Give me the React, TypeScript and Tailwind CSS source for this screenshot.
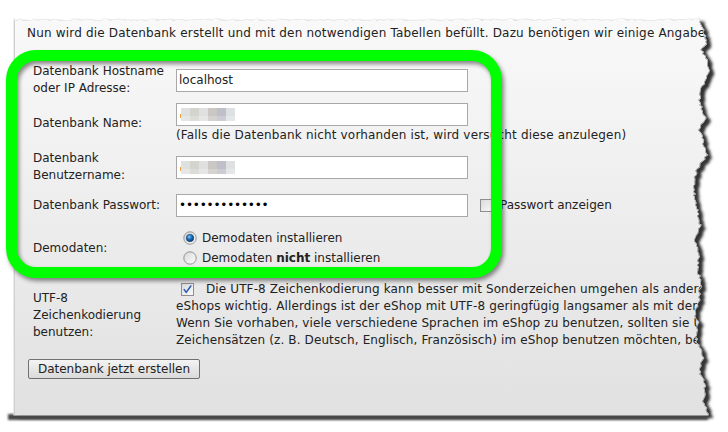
import React from 'react';

// deterministic jitter for the torn paper edge
const noise = (i: number) => {
  const s = Math.sin(i * 12.9898 + 4.1414) * 43758.5453;
  return s - Math.floor(s);
};

const anchors: [number, number][] = [
  [18, 699], [30, 703], [42, 707], [50, 701], [58, 706], [70, 709], [82, 704], [92, 699],
  [105, 700], [118, 705], [128, 699], [142, 703], [155, 707], [165, 699], [178, 694],
  [195, 694], [210, 697], [225, 700], [240, 695], [255, 699], [270, 697], [282, 701],
  [292, 699], [302, 699], [312, 694], [322, 698], [333, 696], [343, 697], [356, 703],
  [370, 699], [386, 705], [400, 703], [415, 708],
];

const buildPanelPath = () => {
  const pts: string[] = [];
  let k = 0;
  for (let x = 14; x < 699; x += 3) {
    pts.push(`${x},${(20 + (noise(k++) - 0.5) * 2).toFixed(1)}`);
  }
  for (let a = 0; a < anchors.length - 1; a++) {
    const [y0, x0] = anchors[a];
    const [y1, x1] = anchors[a + 1];
    for (let y = y0; y < y1; y += 2) {
      const t = (y - y0) / (y1 - y0);
      const x = x0 + (x1 - x0) * t + (noise(k++) - 0.5) * 2.6;
      pts.push(`${x.toFixed(1)},${y}`);
    }
  }
  pts.push('708,415', '14,415');
  return 'M' + pts.join(' L') + ' Z';
};

const panelPath = buildPanelPath();
const outsidePath = 'M0,0 H728 V432 H0 Z ' + panelPath;

const TornFrame = () => (
  <svg className="absolute inset-0 pointer-events-none" width="728" height="432" viewBox="0 0 728 432">
    <defs>
      <clipPath id="outside">
        <path d={outsidePath} clipRule="evenodd" />
      </clipPath>
      <filter id="blur" x="-5%" y="-5%" width="110%" height="110%">
        <feGaussianBlur stdDeviation="1.4" />
      </filter>
      <filter id="blur2" x="-5%" y="-100%" width="110%" height="300%">
        <feGaussianBlur stdDeviation="0.8" />
      </filter>
    </defs>
    <path d={outsidePath} fill="#ffffff" fillRule="evenodd" />
    <g clipPath="url(#outside)">
      <path d={panelPath} transform="translate(5,3)" fill="#2a2a2a" filter="url(#blur)" />
      <path d={panelPath} transform="translate(3,2)" fill="#3c3c3c" opacity="0.6" filter="url(#blur)" />
      <rect x="8" y="414" width="700" height="6" fill="#474747" filter="url(#blur2)" />
      <path d={panelPath} fill="none" stroke="#e2e2e2" strokeWidth="1.2" />
    </g>
  </svg>
);

const Radio = ({ checked, id }: { checked?: boolean; id: string }) => (
  <svg width="14" height="14" viewBox="0 0 14 14" className="shrink-0">
    <defs>
      <linearGradient id={`rg-${id}`} x1="0" y1="0" x2="1" y2="1">
        <stop offset="0" stopColor="#d6d6d6" />
        <stop offset="1" stopColor="#ffffff" />
      </linearGradient>
      <radialGradient id={`rd-${id}`} cx="0.4" cy="0.35" r="0.7">
        <stop offset="0" stopColor="#8fd0ff" />
        <stop offset="0.4" stopColor="#1f78c4" />
        <stop offset="1" stopColor="#08305e" />
      </radialGradient>
    </defs>
    <circle cx="7" cy="7" r="6.2" fill={`url(#rg-${id})`} stroke="#8a8a8a" strokeWidth="0.9" />
    {checked && <circle cx="7" cy="7" r="3.8" fill={`url(#rd-${id})`} stroke="#0d3a6a" strokeWidth="0.5" />}
  </svg>
);

const Checkbox = ({ checked, id }: { checked?: boolean; id: string }) => (
  <svg width="13" height="13" viewBox="0 0 13 13" className="shrink-0">
    <defs>
      <linearGradient id={`cg-${id}`} x1="0" y1="0" x2="1" y2="1">
        <stop offset="0" stopColor="#d9d9d9" />
        <stop offset="1" stopColor="#fbfbfb" />
      </linearGradient>
    </defs>
    <rect x="0.5" y="0.5" width="12" height="12" fill={`url(#cg-${id})`} stroke="#8e8e8e" />
    {checked && (
      <path d="M3.2 6.6 L5.2 9.4 L9.8 3" fill="none" stroke="#2a5db0" strokeWidth="1.6" strokeLinecap="round" strokeLinejoin="round" />
    )}
  </svg>
);

const Blurred = () => {
  const cols = ['#dfe1e1', '#d3d4ce', '#e0e0e0', '#cbc7c4', '#bfbfc9', '#dde1e1'];
  return (
    <div className="flex items-center h-full pl-[1px]">
      <div className="w-[1px] h-[4px] bg-[#f0a040] mt-[3px]" />
      {cols.map((c, i) => (
        <div key={i} className="flex flex-col w-[9px] h-[13px]">
          <div className="h-[8px]" style={{ backgroundColor: c }} />
          <div className="h-[5px] opacity-80" style={{ backgroundColor: c }} />
        </div>
      ))}
    </div>
  );
};

const TextBox = ({ children }: { children?: React.ReactNode }) => (
  <div className="w-[292px] h-[23px] border border-[#a8a8a8] bg-white pl-[2px] flex items-center shrink-0">
    {children}
  </div>
);

export default function App() {
  return (
    <div className="w-[728px] h-[432px] relative overflow-hidden bg-white font-['DejaVu_Sans',sans-serif] text-[12px] text-[#222]">
      <div className="ml-[14px] mt-[20px] w-[714px] h-[395px] border-l border-[#cfcfcf] bg-linear-to-b from-[#f9f9f9] to-[#e1e1e1] pl-[12px] pt-[5px] overflow-hidden">
        <p className="leading-[17px] whitespace-nowrap tracking-[0.18px]">
          Nun wird die Datenbank erstellt und mit den notwendigen Tabellen befüllt. Dazu benötigen wir einige Angaben.
        </p>

        <div className="mt-[20px] pl-[6px] leading-[17px]">
          <div className="flex items-center h-[36px]">
            <div className="w-[143px] shrink-0">Datenbank Hostname<br />oder IP Adresse:</div>
            <TextBox>localhost</TextBox>
          </div>

          <div className="flex items-center h-[46px] mt-[2px]">
            <div className="w-[143px] shrink-0">Datenbank Name:</div>
            <div className="flex flex-col">
              <TextBox><Blurred /></TextBox>
              <div className="mt-[1px] whitespace-nowrap tracking-[0.17px]">(Falls die Datenbank nicht vorhanden ist, wird versucht diese anzulegen)</div>
            </div>
          </div>

          <div className="flex items-center h-[38px] mt-[2px]">
            <div className="w-[143px] shrink-0">Datenbank<br />Benutzername:</div>
            <TextBox><Blurred /></TextBox>
          </div>

          <div className="flex items-center h-[30px] mt-[4px]">
            <div className="w-[143px] shrink-0">Datenbank Passwort:</div>
            <TextBox>
              <span className="text-[12px] tracking-[-0.2px] text-black">•••••••••••••</span>
            </TextBox>
            <div className="ml-[12px]"><Checkbox id="pw" /></div>
            <span className="ml-[7px] whitespace-nowrap">Passwort anzeigen</span>
          </div>

          <div className="flex items-center h-[40px] mt-[8px]">
            <div className="w-[143px] shrink-0">Demodaten:</div>
            <div className="flex flex-col pl-[7px]">
              <div className="flex items-center h-[20px] gap-[5px]">
                <Radio id="r1" checked />
                <span>Demodaten installieren</span>
              </div>
              <div className="flex items-center h-[20px] gap-[5px]">
                <Radio id="r2" />
                <span>Demodaten <b>nicht</b> installieren</span>
              </div>
            </div>
          </div>

          <div className="flex items-center h-[70px] mt-[12px]">
            <div className="w-[143px] shrink-0">UTF-8<br />Zeichenkodierung<br />benutzen:</div>
            <div className="flex flex-col whitespace-nowrap tracking-[0.12px]">
              <div className="flex items-center h-[17px] pl-[5px]">
                <Checkbox id="utf" checked />
                <span className="ml-[12px]">Die UTF-8 Zeichenkodierung kann besser mit Sonderzeichen umgehen als andere</span>
              </div>
              <div>eShops wichtig. Allerdings ist der eShop mit UTF-8 geringfügig langsamer als mit der</div>
              <div>Wenn Sie vorhaben, viele verschiedene Sprachen im eShop zu benutzen, sollten sie UTF-8</div>
              <div>Zeichensätzen (z. B. Deutsch, Englisch, Französisch) im eShop benutzen möchten, benötigen</div>
            </div>
          </div>
        </div>

        <button className="mt-[9px] ml-[1px] w-[172px] h-[20px] border border-[#707070] rounded-[2px] bg-linear-to-b from-[#f4f4f4] to-[#dadada] text-[12px] leading-[18px] text-[#222] text-center">
          Datenbank jetzt erstellen
        </button>
      </div>

      <TornFrame />

      <div className="absolute left-[6px] top-[50px] w-[496px] h-[228px] border-[11px] border-[#00ff00] rounded-[30px] drop-shadow-[2px_3px_2px_rgba(0,0,0,0.45)] pointer-events-none" />
    </div>
  );
}
